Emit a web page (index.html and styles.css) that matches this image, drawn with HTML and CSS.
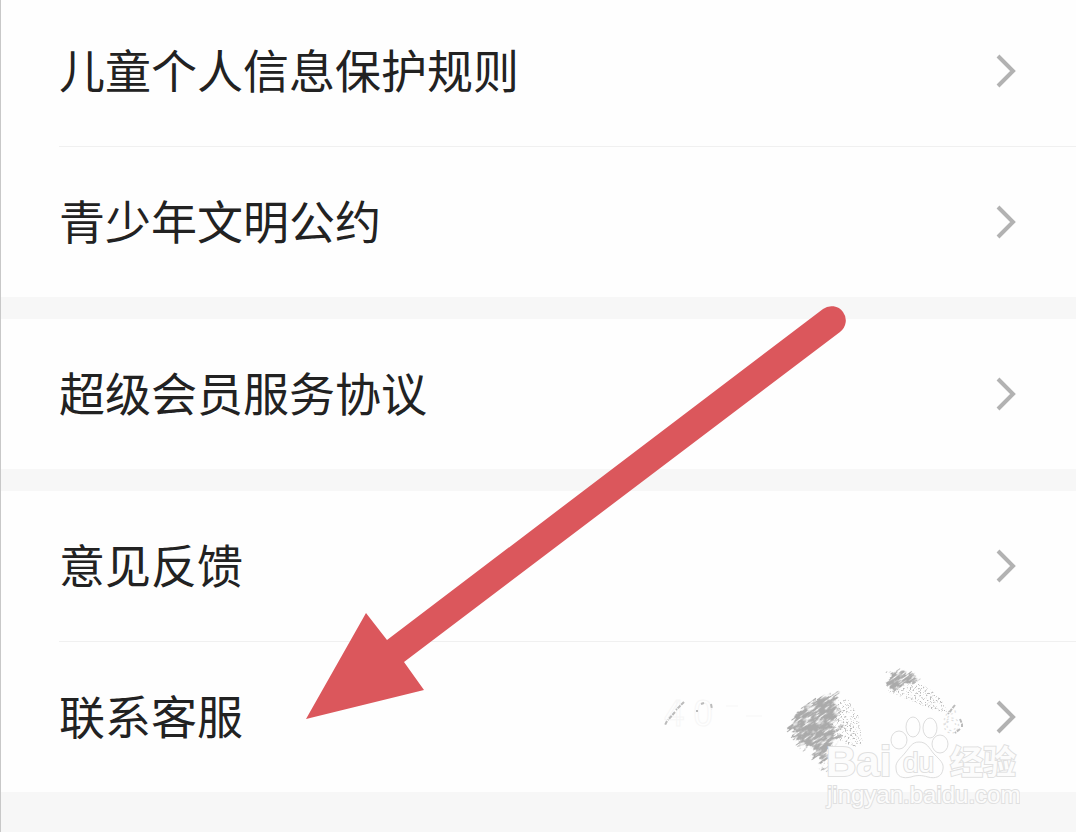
FILE: index.html
```
<!DOCTYPE html>
<html lang="zh-CN">
<head>
  <meta charset="utf-8">
  <title>设置</title>
  <meta name="viewport" content="width=device-width, initial-scale=1">
  <link rel="stylesheet" href="styles.css">
</head>
<body>

  <div class="page">
    <nav class="settings">
      <div class="group">
        <a class="row" href="#">
          <span class="label">儿童个人信息保护规则</span>
          <svg class="chevron" viewBox="0 0 22 36"><path d="M3 3L18 18L3 33"/></svg>
        </a>
        <a class="row" href="#">
          <span class="label">青少年文明公约</span>
          <svg class="chevron" viewBox="0 0 22 36"><path d="M3 3L18 18L3 33"/></svg>
        </a>
      </div>

      <div class="group">
        <a class="row" href="#">
          <span class="label">超级会员服务协议</span>
          <svg class="chevron" viewBox="0 0 22 36"><path d="M3 3L18 18L3 33"/></svg>
        </a>
      </div>

      <div class="group">
        <a class="row" href="#">
          <span class="label">意见反馈</span>
          <svg class="chevron" viewBox="0 0 22 36"><path d="M3 3L18 18L3 33"/></svg>
        </a>
        <a class="row" href="#">
          <span class="label">联系客服</span>
          <svg class="chevron" viewBox="0 0 22 36"><path d="M3 3L18 18L3 33"/></svg>
        </a>
      </div>
    </nav>

    <!-- Arrow pointing at customer service -->
    <svg class="arrow" viewBox="0 0 540 414">
      <path d="M0 413L60 307L81 334L517 3A14 14 0 0 1 534 26L98 356L118 384Z"/>
    </svg>

    <!-- Erased phone number and watermark -->
    <svg class="watermark" viewBox="0 0 370 150">
      <defs>
        <filter id="grain" x="-20%" y="-20%" width="140%" height="140%">
          <feTurbulence type="fractalNoise" baseFrequency="0.1 0.5" numOctaves="3" seed="4" result="noise"/>
          <feColorMatrix in="noise" type="matrix" values="0 0 0 0 0  0 0 0 0 0  0 0 0 0 0  4 0 0 0 -1" result="mask"/>
          <feDisplacementMap in="SourceGraphic" in2="noise" scale="12" xChannelSelector="R" yChannelSelector="G" result="rough"/>
          <feComposite in="rough" in2="mask" operator="in"/>
        </filter>
        <filter id="speckle" x="-10%" y="-10%" width="120%" height="120%">
          <feTurbulence type="fractalNoise" baseFrequency="0.6" numOctaves="3" seed="9" result="noise"/>
          <feColorMatrix in="noise" type="matrix" values="0 0 0 0 0  0 0 0 0 0  0 0 0 0 0  6 0 0 0 -3.3" result="mask"/>
          <feComposite in="SourceGraphic" in2="mask" operator="in"/>
        </filter>
      </defs>

      <g class="number">
        <text x="14" y="66">4</text>
        <text x="43" y="66">0</text>
        <path d="M76 46H88M96 56H112"/>
        <text class="last" x="292" y="73">6</text>
      </g>
      <path class="remnant" d="M34 42L26 50M25 52L18 60M17 61L15 65M51 44L54 43M61 44L62 49M47 50V52M305 45L298 54M310 59L312 64V67M310 69L305 73"/>

      <g transform="rotate(-35)">
        <g class="scribble" filter="url(#grain)">
          <g transform="rotate(35)">
            <path d="M189 33L178 35L160 44L147 53L142 58L147 58L138 70L146 70L143 76L148 77L147 85L153 82L153 87L159 85L166 89L162 98L169 95L171 104L175 101L178 90L186 78L183 68L189 50L184 43Z"/>
            <path class="streak" d="M154 48L186 34M147 56L178 41M139 71L154 61M143 78L160 64M147 86L164 74M153 88L170 76M163 98L179 87M172 110L182 102M169 104L180 94M181 74L194 65M179 84L192 74M179 56L190 49"/>
            <path d="M239 12L244 13L249 11L260 12L268 18L263 23L256 22L252 28L245 27L246 30L238 26L235 22L242 18Z"/>
            <path class="streak" d="M241 16L250 11M237 26L250 18M245 30L260 22M251 12L262 15M254 24L267 20"/>
          </g>
        </g>
      </g>
      <g class="dust" filter="url(#speckle)">
        <path d="M189 39L199 40L208 55L213 85L204 87L188 80L182 70Z"/>
        <path d="M262 20L275 25L291 39L299 52L285 51L264 42L234 30L250 28Z"/>
      </g>

      <g class="paw">
        <ellipse cx="249" cy="80" rx="8" ry="9"/>
        <ellipse cx="263" cy="67" rx="7" ry="10"/>
        <ellipse cx="280" cy="68" rx="7" ry="10"/>
        <ellipse cx="290" cy="84" rx="8" ry="9"/>
        <path d="M269 82C277 82 279 88 284 94C290 100 294 103 293 109C292 117 285 119 278 117C271 115 267 115 261 117C253 119 246 117 246 108C245 102 251 98 255 93C260 87 262 82 269 82Z"/>
      </g>
      <g class="mark">
        <text class="bai" x="176" y="116">Bai</text>
        <text class="du" x="253" y="112">du</text>
        <text class="jingyan" x="300" y="114">经验</text>
        <text class="url" x="177" y="143">jingyan.baidu.com</text>
      </g>
    </svg>
  </div>

</body>
</html>
```
FILE: styles.css
```
* {
  box-sizing: border-box;
}

body {
  margin: 0;
  background-color: #f7f7f7;
  color: #222;
  font-family: "Noto Sans CJK SC", sans-serif;
}

.page {
  position: relative;
  min-height: 100vh;
  border-left: 1px solid #c8c8c8;
  overflow: hidden;
}

.settings {
  display: flex;
  flex-direction: column;
  gap: 22px;
  margin-top: -4px;
}

.group {
  padding-left: 58px;
  background-color: #fefefe;
}

.row {
  display: flex;
  align-items: center;
  justify-content: space-between;
  padding: 40px 59px 40px 0;
  color: #222;
  font-size: 46px;
  line-height: 64px;
  text-decoration: none;
}

.row + .row {
  border-top: 1px solid #f0f0f0;
}

.label {
  padding-bottom: 6px;
}

.chevron {
  flex: none;
  width: 22px;
  height: 36px;
  fill: none;
  stroke: #b2b2b2;
  stroke-width: 4;
}

/* Arrow */
.arrow {
  position: absolute;
  top: 306px;
  left: 305px;
  width: 540px;
  height: 414px;
  overflow: visible;
  fill: #db575c;
  pointer-events: none;
}

/* Watermark */
.watermark {
  position: absolute;
  top: 660px;
  right: 56px;
  width: 370px;
  height: 150px;
  pointer-events: none;
}

.number {
  fill: none;
  stroke: #f6f6f6;
  font-family: Roboto, sans-serif;
  font-size: 36px;
}

.number .last {
  stroke: #ddd;
  stroke-dasharray: 2 3;
  font-size: 32px;
}

.remnant {
  fill: none;
  stroke: #bbb;
  stroke-width: 2;
  stroke-dasharray: 4 1;
}

.scribble {
  fill: #aaa;
}

.scribble .streak {
  fill: none;
  stroke: #aaa;
  stroke-width: 2;
}

.dust {
  fill: #bbb;
}

.paw {
  fill: #fefefe;
  stroke: #ddd;
  stroke-width: 1;
}

.mark {
  fill: #fcfcfc;
  stroke: #e0e0e0;
  stroke-width: 2;
  paint-order: stroke;
  font-family: "Liberation Sans", sans-serif;
}

.mark .bai {
  font-size: 42px;
  font-weight: bold;
}

.mark .du {
  font-size: 28px;
}

.mark .jingyan {
  font-family: "Noto Sans CJK SC", sans-serif;
  font-size: 33px;
  font-weight: bold;
}

.mark .url {
  font-size: 24px;
}
```
